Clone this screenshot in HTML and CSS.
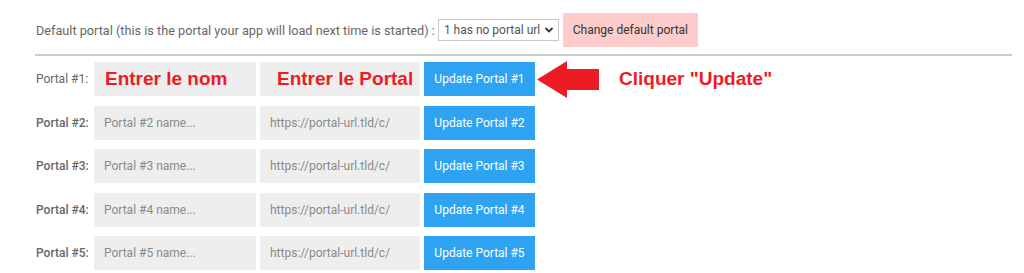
FILE: index.html
```html
<!DOCTYPE html>
<html lang="en">
<head>
<meta charset="utf-8">
<title>Portals</title>
<link rel="stylesheet" href="styles.css">
</head>
<body>
<div class="page">
  <div class="default-row">
    <span class="default-label">Default portal (this is the portal your app will load next time is started) :</span>
    <span class="select-wrap">
      <select class="portal-select"><option>1 has no portal url</option></select>
      <svg class="chev" width="10" height="8" viewBox="0 0 10 8"><path d="M1.5 2 L5 5.5 L8.5 2" fill="none" stroke="#333" stroke-width="1.8"/></svg>
    </span>
    <button class="btn-default">Change default portal</button>
  </div>
  <div class="rule"></div>
  <div class="rows">
    <div class="row">
      <span class="label label-first">Portal #1:</span>
      <input class="field field-name annot annot-name" type="text" value="Entrer le nom">
      <input class="field field-url annot annot-url" type="text" value="Entrer le Portal">
      <button class="btn-update">Update Portal #1</button>
      <svg class="arrow" width="63" height="37" viewBox="0 0 63 37"><polygon points="0,18.5 30,0 30,8 62,8 62,29 30,29 30,37" fill="#ed1c24"/></svg>
      <span class="callout">Cliquer "Update"</span>
    </div>
    <div class="row">
      <span class="label">Portal #2:</span>
      <input class="field field-name" type="text" placeholder="Portal #2 name...">
      <input class="field field-url" type="text" placeholder="https://portal-url.tld/c/">
      <button class="btn-update">Update Portal #2</button>
    </div>
    <div class="row">
      <span class="label">Portal #3:</span>
      <input class="field field-name" type="text" placeholder="Portal #3 name...">
      <input class="field field-url" type="text" placeholder="https://portal-url.tld/c/">
      <button class="btn-update">Update Portal #3</button>
    </div>
    <div class="row">
      <span class="label">Portal #4:</span>
      <input class="field field-name" type="text" placeholder="Portal #4 name...">
      <input class="field field-url" type="text" placeholder="https://portal-url.tld/c/">
      <button class="btn-update">Update Portal #4</button>
    </div>
    <div class="row">
      <span class="label">Portal #5:</span>
      <input class="field field-name" type="text" placeholder="Portal #5 name...">
      <input class="field field-url" type="text" placeholder="https://portal-url.tld/c/">
      <button class="btn-update">Update Portal #5</button>
    </div>
  </div>
</div>
</body>
</html>
```

FILE: styles.css
```css
html, body {
  margin: 0;
  padding: 0;
  background: #ffffff;
}
body {
  font-family: Roboto, "Liberation Sans", sans-serif;
  font-size: 12px;
  color: #666666;
}
.page {
  padding: 13px 12px 0 35px;
}
.default-row {
  display: flex;
  align-items: center;
  height: 34px;
  padding-left: 1px;
}
.default-label {
  color: #666666;
  font-size: 12.7px;
  white-space: nowrap;
}
.select-wrap {
  position: relative;
  margin-left: 3px;
  display: inline-block;
}
.portal-select {
  -webkit-appearance: none;
  appearance: none;
  width: 121px;
  height: 22px;
  border: 1px solid #c8c8c8;
  border-radius: 0;
  background: #ffffff;
  font-family: Roboto, "Liberation Sans", sans-serif;
  font-size: 12px;
  color: #555555;
  padding: 0 12px 0 5px;
  display: block;
}
.chev {
  position: absolute;
  right: 5px;
  top: 7px;
  pointer-events: none;
}
.btn-default {
  margin-left: 4px;
  width: 135px;
  height: 34px;
  border: none;
  background: #ffcccc;
  color: #333333;
  font-family: Roboto, "Liberation Sans", sans-serif;
  font-size: 12px;
  padding: 0;
}
.rule {
  margin-top: 7px;
  height: 2px;
  background: #cccccc;
}
.rows {
  margin-top: 6px;
  display: flex;
  flex-direction: column;
  gap: 9.5px;
}
.row {
  display: flex;
  align-items: center;
  height: 34px;
}
.label {
  flex: 0 0 58px;
  margin-left: 1px;
  font-weight: 500;
  color: #666666;
  white-space: nowrap;
}
.label-first {
  font-weight: 400;
}
.field {
  height: 34px;
  box-sizing: border-box;
  border: none;
  outline: none;
  background: #eeeeee;
  font-family: Roboto, "Liberation Sans", sans-serif;
  font-size: 12px;
  color: #8a8a8a;
  padding: 0 10px;
  margin: 0 4px 0 0;
}
.field::placeholder {
  color: #8a8a8a;
  opacity: 1;
}
.field-name {
  width: 162px;
}
.field-url {
  width: 160px;
}
.annot {
  font-family: "Liberation Sans", Arial, sans-serif;
  font-weight: bold;
  font-size: 19px;
  color: #ed1c24;
  padding-right: 0;
}
.annot-name {
  padding-left: 11px;
}
.annot-url {
  padding-left: 17px;
}
.btn-update {
  width: 111px;
  height: 34px;
  border: none;
  background: #2ea3f2;
  color: #ffffff;
  font-family: Roboto, "Liberation Sans", sans-serif;
  font-size: 12px;
  padding: 0;
}
.arrow {
  display: block;
  margin: -2px 0 -2px 2px;
}
.callout {
  margin-left: 19px;
  font-family: "Liberation Sans", Arial, sans-serif;
  font-weight: bold;
  font-size: 19px;
  color: #ed1c24;
  white-space: nowrap;
}
```
